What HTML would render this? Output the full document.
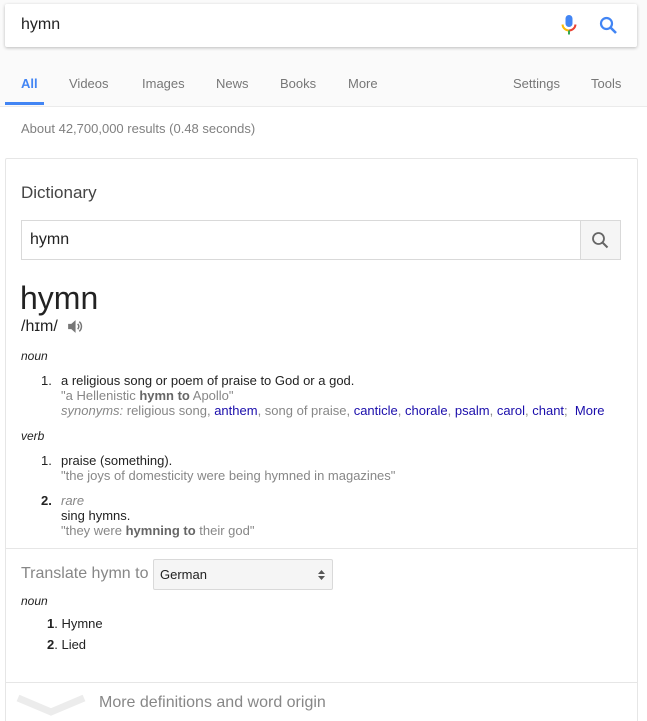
<!DOCTYPE html>
<html><head><meta charset="utf-8"><style>
*{margin:0;padding:0;box-sizing:border-box}
html,body{width:647px;height:721px;overflow:hidden}
body{background:#fff;font-family:"Liberation Sans",Arial,sans-serif;position:relative;color:#222}
.a{position:absolute;white-space:nowrap}
.hdr{position:absolute;left:0;top:0;width:647px;height:107px;background:#fafafa;border-bottom:1px solid #ebebeb}
.sb{position:absolute;left:5px;top:4px;width:632px;height:43px;background:#fff;box-shadow:0 1px 3px rgba(0,0,0,.25);border-radius:2px}
.tab{font-size:13px;color:#777;top:76px}
.card{position:absolute;left:5px;top:158px;width:633px;height:570px;border:1px solid #e6e6e6;border-radius:2px;background:#fff}
.g{color:#878787}
.lk{color:#1a0dab}
.s13{font-size:13px}
</style></head><body>
<div class="hdr"></div>
<div class="sb"></div>
<div class="a" style="left:21px;top:16px;font-size:16px;color:#222">hymn</div>
<svg class="a" style="left:560px;top:14px" width="18" height="22" viewBox="0 0 18 22">
<rect x="5.5" y="1" width="7" height="12" rx="3.5" fill="#4285f4"/>
<path d="M2.5 10.5a6.5 6.5 0 0 0 6.5 6" stroke="#fbbc05" stroke-width="2" fill="none"/>
<path d="M15.5 10.5a6.5 6.5 0 0 1 -6.5 6" stroke="#ea4335" stroke-width="2" fill="none"/>
<rect x="8" y="16.5" width="2" height="4" fill="#34a853"/>
</svg>
<svg class="a" style="left:599px;top:16px" width="20" height="20" viewBox="0 0 20 20">
<circle cx="7.5" cy="7.5" r="5.5" stroke="#4285f4" stroke-width="2.2" fill="none"/>
<path d="M11.5 11.5L17 17" stroke="#4285f4" stroke-width="2.6"/>
</svg>
<div class="a tab" style="left:21px;font-weight:bold;color:#4285f4">All</div>
<div class="a" style="left:5px;top:102px;width:39px;height:3px;background:#4285f4"></div>
<div class="a tab" style="left:69px">Videos</div>
<div class="a tab" style="left:142px">Images</div>
<div class="a tab" style="left:216px">News</div>
<div class="a tab" style="left:280px">Books</div>
<div class="a tab" style="left:348px">More</div>
<div class="a tab" style="left:513px">Settings</div>
<div class="a tab" style="left:591px">Tools</div>
<div class="a" style="left:21px;top:121px;font-size:13px;color:#808080">About 42,700,000 results (0.48 seconds)</div>

<div class="card"></div>
<div class="a" style="left:21px;top:183px;font-size:17px;color:#444">Dictionary</div>
<div class="a" style="left:21px;top:220px;width:600px;height:40px;border:1px solid #d9d9d9;background:#fff"></div>
<div class="a" style="left:580px;top:220px;width:41px;height:40px;border:1px solid #d9d9d9;background:#f5f5f5"></div>
<svg class="a" style="left:591px;top:231px" width="20" height="20" viewBox="0 0 20 20"><circle cx="7.5" cy="7.5" r="5.5" stroke="#666" stroke-width="1.8" fill="none"/><path d="M11.5 11.5L16.5 16.5" stroke="#666" stroke-width="2"/></svg>
<div class="a" style="left:30px;top:231px;font-size:16px;color:#222">hymn</div>

<div class="a" style="left:20px;top:280px;font-size:32px;color:#222">hymn</div>
<div class="a" style="left:21px;top:318px;font-size:16px;color:#222">/hɪm/</div>
<svg class="a" style="left:66px;top:318px" width="17" height="17" viewBox="0 0 16 16"><path d="M2 5.5h3l4-3.5v12l-4-3.5H2z" fill="#777"/><path d="M11 5.5a3.5 3.5 0 0 1 0 5M12.5 3.5a6 6 0 0 1 0 9" stroke="#777" stroke-width="1.4" fill="none"/></svg>
<div class="a" style="left:21px;top:349px;font-size:12px;font-style:italic;color:#222">noun</div>
<div class="a s13" style="left:41px;top:373px">1.</div>
<div class="a s13" style="left:61px;top:373px">a religious song or poem of praise to God or a god.</div>
<div class="a s13 g" style="left:61px;top:388px">"a Hellenistic <b style="color:#666">hymn to</b> Apollo"</div>
<div class="a s13 g" style="left:61px;top:403px"><i>synonyms:</i> religious song, <span class="lk">anthem</span>, song of praise, <span class="lk">canticle</span>, <span class="lk">chorale</span>, <span class="lk">psalm</span>, <span class="lk">carol</span>, <span class="lk">chant</span>; &nbsp;<span class="lk">More</span></div>
<div class="a" style="left:21px;top:429px;font-size:12px;font-style:italic;color:#222">verb</div>
<div class="a s13" style="left:41px;top:453px">1.</div>
<div class="a s13" style="left:61px;top:453px">praise (something).</div>
<div class="a s13 g" style="left:61px;top:468px">"the joys of domesticity were being hymned in magazines"</div>
<div class="a s13" style="left:41px;top:493px;font-weight:bold">2.</div>
<div class="a s13 g" style="left:61px;top:493px;font-style:italic">rare</div>
<div class="a s13" style="left:61px;top:508px">sing hymns.</div>
<div class="a s13 g" style="left:61px;top:523px">"they were <b style="color:#666">hymning to</b> their god"</div>

<div class="a" style="left:5px;top:548px;width:633px;height:1px;background:#e6e6e6"></div>
<div class="a" style="left:21px;top:565px;font-size:16px;color:#878787">Translate hymn to</div>
<div class="a" style="left:153px;top:559px;width:180px;height:31px;border:1px solid #d9d9d9;border-radius:2px;background:#f5f5f5"></div>
<div class="a s13" style="left:160px;top:567px">German</div>
<svg class="a" style="left:317px;top:569px" width="9" height="12" viewBox="0 0 9 12"><path d="M1 5L4.5 1L8 5zM1 7L4.5 11L8 7z" fill="#555"/></svg>
<div class="a" style="left:21px;top:594px;font-size:12px;font-style:italic">noun</div>
<div class="a s13" style="left:47px;top:616px"><b>1</b>. Hymne</div>
<div class="a s13" style="left:47px;top:637px"><b>2</b>. Lied</div>
<div class="a" style="left:5px;top:682px;width:633px;height:1px;background:#e6e6e6"></div>
<svg class="a" style="left:16px;top:692px" width="70" height="26" viewBox="0 0 70 26"><path d="M2 6L35 20L68 6" stroke="#ececec" stroke-width="7" fill="none"/></svg>
<div class="a" style="left:99px;top:694px;font-size:16px;color:#878787">More definitions and word origin</div>
</body></html>
